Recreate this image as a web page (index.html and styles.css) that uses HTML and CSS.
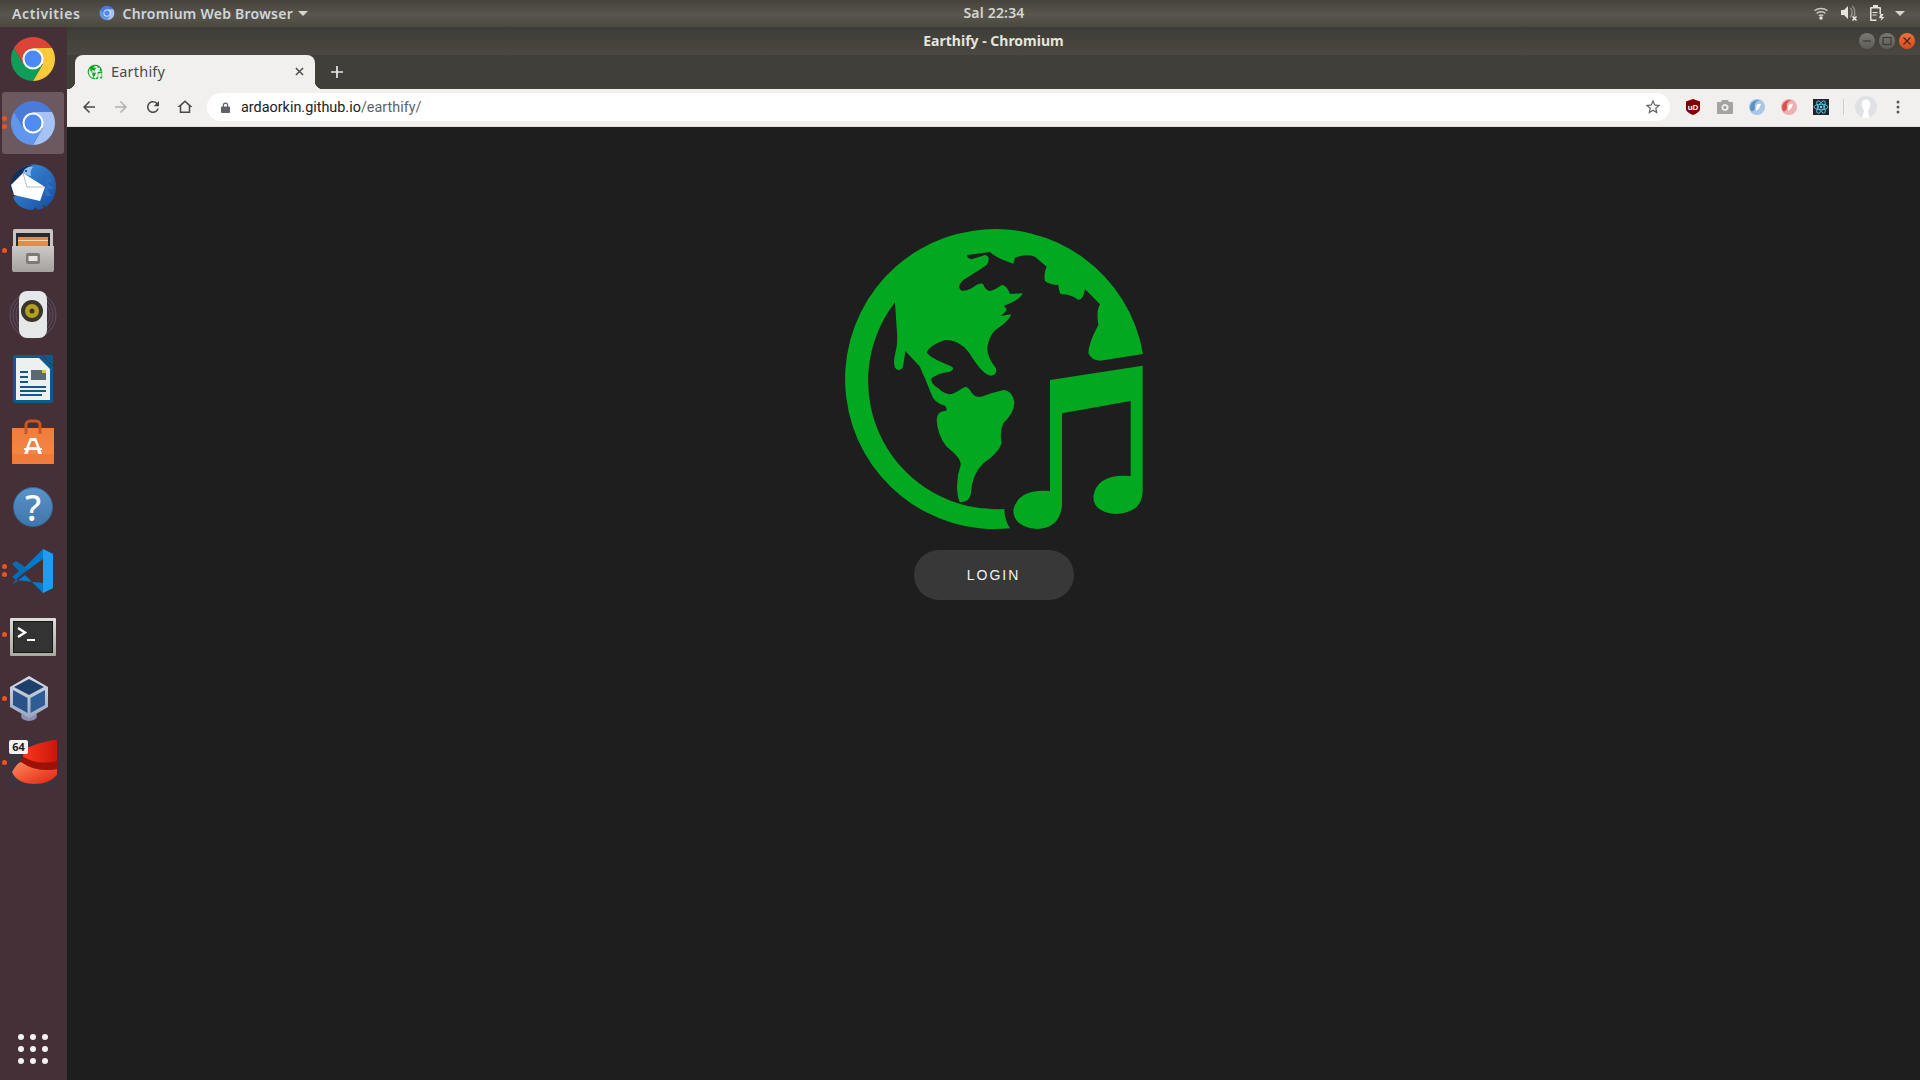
FILE: index.html
```html
<!DOCTYPE html>
<html lang="en">
<head>
  <meta charset="UTF-8">
  <title>Earthify - Chromium</title>
  <link rel="stylesheet" href="styles.css">
</head>
<body>
  <!-- shared icons -->
  <svg class="defs" width="0" height="0">
    <defs>
      <linearGradient id="grad-metal" x1="0" y1="0" x2="0" y2="1"><stop offset="0" stop-color="#cbc9c5"/><stop offset="1" stop-color="#a4a29e"/></linearGradient>
      <linearGradient id="grad-term" x1="0" y1="0" x2="0" y2="1"><stop offset="0" stop-color="#dededa"/><stop offset="1" stop-color="#a8a8a2"/></linearGradient>
      <linearGradient id="grad-hat" x1="0" y1="0" x2="1" y2="0"><stop offset="0" stop-color="#ff3a1c"/><stop offset="1" stop-color="#c8160c"/></linearGradient>
      <linearGradient id="grad-brim" x1="0" y1="0" x2="1" y2="1"><stop offset="0" stop-color="#ff8a5a"/><stop offset="1" stop-color="#e0200f"/></linearGradient>
      <linearGradient id="grad-help" x1="0" y1="0" x2="0" y2="1"><stop offset="0" stop-color="#5a93c8"/><stop offset="1" stop-color="#3f76aa"/></linearGradient>
      <linearGradient id="grad-bag" x1="0" y1="0" x2="0" y2="1"><stop offset="0" stop-color="#ef7c3e"/><stop offset="1" stop-color="#f58a48"/></linearGradient>
      <linearGradient id="grad-cube" x1="0" y1="0" x2="0" y2="1"><stop offset="0" stop-color="#d6deea"/><stop offset="1" stop-color="#9aa8c0"/></linearGradient>
      <linearGradient id="grad-bird" x1="0" y1="0" x2="1" y2="1"><stop offset="0" stop-color="#3f94e4"/><stop offset="1" stop-color="#174a9a"/></linearGradient>
    </defs>
    <symbol id="earthify" viewBox="0 0 990 990">
      <path d="M939 417A450 450 0 1 0 540 940Q523 915 523 882A385 385 0 0 1 195 262L200 340Q204 380 198 405Q188 445 195 458Q207 472 218 458Q222 440 226 408L270 455Q275 470 285 490Q295 515 303 535Q312 565 345 572Q355 585 345 588Q320 590 320 615Q322 660 350 695Q395 730 392 750Q378 790 382 830Q385 860 392 862Q420 860 423 835Q425 780 460 745Q505 715 515 685Q508 650 520 625Q555 590 553 560Q545 525 520 525Q480 535 455 545Q435 548 425 533Q412 510 400 518Q370 538 358 538Q340 535 325 520Q300 505 305 490Q320 475 360 470Q380 460 360 452Q300 430 290 412Q300 390 345 375Q395 375 425 425Q460 480 483 482Q505 478 497 458Q470 425 472 395Q480 350 510 335Q540 315 543 298L510 303Q525 295 530 283L522 272Q570 255 578 235L540 237Q530 210 515 210Q495 225 480 228Q465 225 460 208Q450 200 425 220Q400 232 392 225Q380 215 400 195Q440 170 470 150Q485 125 465 120L425 133Q410 130 412 120L480 111Q500 130 550 146L555 128Q590 115 615 125L650 155Q640 175 645 198Q660 210 685 210Q688 238 695 238Q725 238 745 255Q760 255 765 222L810 268Q798 285 805 330Q775 385 775 415Q785 437 810 437Z"/>
      <path d="M660 495L938 452V830Q935 895 855 897Q790 890 790 845Q800 775 902 783V558L696 595V870Q690 940 620 942Q550 935 550 885Q565 820 660 828Z"/>
    </symbol>
    <symbol id="chromium" viewBox="0 0 48 48">
      <path fill="#4a7bd9" d="M4.950 13A22 22 0 0 1 43.050 13H24L14.500 29.500Z"/>
      <path fill="#a6c3f7" d="M43.050 13A22 22 0 0 1 24 46L33.500 29.500L24 13Z"/>
      <path fill="#6097ec" d="M24 46A22 22 0 0 1 4.950 13L14.500 29.500H33.500Z"/>
      <circle cx="24" cy="24" r="10.500" fill="#fff"/>
      <circle cx="24" cy="24" r="8.500" fill="#4f8bf0"/>
    </symbol>
  </svg>

  <header class="topbar">
    <div class="topbar-left">
      <span class="activities">Activities</span>
      <span class="appmenu">
        <svg class="appmenu-icon"><use href="#chromium"/></svg>
        Chromium Web Browser
        <i class="caret"></i>
      </span>
    </div>
    <div class="clock">Sal 22:34</div>
    <div class="status">
      <svg class="status-icon" viewBox="0 0 16 16"><circle cx="8" cy="13" r="1.700"/><path d="M1 5.200C5 1.900 11 1.900 15 5.200l-1 1.100C10.500 3.500 5.500 3.500 2 6.300zM3.200 7.800c2.900-2.300 6.700-2.300 9.600 0l-1 1.100c-2.300-1.800-5.300-1.800-7.600 0zM5.300 10.200c1.700-1.200 3.700-1.200 5.400 0l-1 1.100c-1.100-.7-2.300-.7-3.400 0z" opacity=".8"/></svg>
      <svg class="status-icon" viewBox="0 0 16 16"><path d="M0 5h3l4-4v13l-4-4H0z"/><path d="M9 3c2.500 1 3 7.500 0 9M11 1c3.500 2 3.500 10 1 12" fill="none" stroke="#d8d6d0" stroke-width="1.300" opacity=".5"/><path d="M11.500 11.500l4 4M15.500 11.500l-4 4" stroke="#e8e6e0" stroke-width="1.500"/></svg>
      <svg class="status-icon" viewBox="0 0 16 16"><path fill-rule="evenodd" d="M4 0h5v2h2a1 1 0 0 1 1 1v6h-1.500V3.500h-8v11h5V16H2a1 1 0 0 1-1-1V3a1 1 0 0 1 1-1h2z"/><path d="M3.500 7h5v1h-5zM3.500 9.500h4v1h-4zM11.500 9l3 0-1.500 3h2.500l-4 4 1-3H10z"/></svg>
      <i class="caret"></i>
    </div>
  </header>

  <div class="desktop">
    <nav class="dock">
      <div class="dock-item">
        <svg class="dock-icon" viewBox="0 0 48 48">
          <path fill="#db4437" d="M4.950 13A22 22 0 0 1 43.050 13H24L14.500 29.500Z"/>
          <path fill="#fdc93c" d="M43.050 13A22 22 0 0 1 24 46L33.500 29.500L24 13Z"/>
          <path fill="#0f9d58" d="M24 46A22 22 0 0 1 4.950 13L14.500 29.500H33.500Z"/>
          <circle cx="24" cy="24" r="10.500" fill="#fff"/>
          <circle cx="24" cy="24" r="8.500" fill="#4a8af4"/>
        </svg>
      </div>
      <div class="dock-item active two">
        <svg class="dock-icon"><use href="#chromium"/></svg>
      </div>
      <div class="dock-item">
        <svg class="dock-icon" viewBox="0 0 48 48">
          <path fill="url(#grad-bird)" d="M9 8C20-3 40 0 46 16C49 28 45 38 37 44L33 41L35 45L28 47L27 44L24 47C14 47 7 42 4 34L30 24Z"/>
          <path fill="#12305f" d="M1 24C2 12 11 2 24 2C20 3 16 6 14 10L3 30Z"/>
          <path fill="#8fc0ee" d="M14 11C14 6 19 3 24 4C22 6 21 9 22 13Z"/>
          <circle cx="17" cy="8" r="1" fill="#12305f"/>
          <path fill="#fff" d="M2 22L14 10L36 24L31 38L5 32Z"/>
          <path fill="none" stroke="#a8a8a8" stroke-width=".8" d="M14 10L18 24L36 24"/>
          <path fill="#2c6fc4" d="M37 13L44 18L38 20L45 25L38 27L43 33L36 33Z"/>
        </svg>
      </div>
      <div class="dock-item one">
        <svg class="dock-icon" viewBox="0 0 48 48">
          <path fill="#c8c6c2" d="M4 4a2 2 0 0 1 2-2h36a2 2 0 0 1 2 2v39a2 2 0 0 1-2 2H6a2 2 0 0 1-2-2z"/>
          <path fill="#2b2a28" d="M7 6h34v14H7z"/>
          <path fill="#e98a3c" d="M9 10h30v10H9z"/>
          <path fill="#f6d3a8" d="M9 13h30v1H9z"/>
          <path fill="url(#grad-metal)" d="M3 19H45V43a2 2 0 0 1-2 2H5a2 2 0 0 1-2-2z"/>
          <rect x="17" y="26" width="14" height="11" rx="2" fill="#7c7a76"/>
          <rect x="19.500" y="29" width="9" height="5" fill="#e6e6e3"/>
        </svg>
      </div>
      <div class="dock-item">
        <svg class="dock-icon" viewBox="0 0 48 48">
          <g fill="none" stroke="#6a6c8a" opacity=".6">
            <circle cx="24" cy="24" r="23"/>
            <circle cx="24" cy="24" r="20"/>
            <circle cx="24" cy="24" r="17"/>
          </g>
          <rect x="10" y="0" width="28" height="47" rx="8" fill="#e4e8e8"/>
          <circle cx="23" cy="20" r="11" fill="#38352e"/>
          <circle cx="23" cy="20" r="7" fill="#b4a01e"/>
          <circle cx="23" cy="20" r="2.500" fill="#38352e"/>
        </svg>
      </div>
      <div class="dock-item">
        <svg class="dock-icon" viewBox="0 0 48 48">
          <path fill="#0f5a8c" d="M6 0H32L44 12V46a2 2 0 0 1-2 2H6a2 2 0 0 1-2-2V2a2 2 0 0 1 2-2z"/>
          <path fill="#eef0f0" d="M7 3H30L41 14V45H7z"/>
          <path fill="#0f5a8c" d="M33 0H44V11z"/>
          <path fill="#0f5a8c" d="M11 16h8v2h-8zM11 21h8v2h-8zM11 26h8v2h-8zM11 31h26v2H11zM11 35h26v2H11zM11 39h22v2H11z"/>
          <path fill="#5a6a72" d="M22 15h15v10H22z"/>
          <path fill="#d8c25a" d="M33 15h4v3h-4z"/>
        </svg>
      </div>
      <div class="dock-item">
        <svg class="dock-icon" viewBox="0 0 48 48">
          <path fill="url(#grad-bag)" d="M3 9H45V44a1 1 0 0 1-1 1H4a1 1 0 0 1-1-1z"/>
          <path fill="#e8682a" d="M3 35H45V45H3z" opacity=".4"/>
          <path fill="none" stroke="#c9551f" stroke-width="3" d="M17 15V6a4 4 0 0 1 4-4h6a4 4 0 0 1 4 4v9"/>
          <path fill="#fff" d="M21 19h6l4 10h2v2h-1.500l1.500 4h-3.500l-1.500-4h-8l-1.500 4H15l1.500-4H15v-2h2zM20 28h8l-2.500-6h-3z"/>
        </svg>
      </div>
      <div class="dock-item">
        <svg class="dock-icon" viewBox="0 0 48 48">
          <circle cx="24" cy="24" r="19.500" fill="url(#grad-help)" stroke="#35679a"/>
          <text class="help-mark" x="24" y="38">?</text>
        </svg>
      </div>
      <div class="dock-item two">
        <svg class="dock-icon" viewBox="0 0 48 48">
          <path fill="#0a6cb5" d="M3 17L7 14L19 23L12 28L7 33L3 30L10 24Z"/>
          <path fill="#007acc" d="M34 2L44 7V41L34 46L16 28L3 38L7 33L34 36V12L19 23L7 14L16 20Z"/>
          <path fill="#1f9cf0" d="M34 2L44 7V41L34 46Z"/>
        </svg>
      </div>
      <div class="dock-item one">
        <svg class="dock-icon" viewBox="0 0 48 48">
          <rect x="1" y="7" width="46" height="38" rx="1" fill="url(#grad-term)"/>
          <rect x="4.500" y="10.500" width="39" height="31" fill="#333" stroke="#161616"/>
          <path fill="none" stroke="#fff" stroke-width="2.400" d="M9 17L16 21.500L9 26"/>
          <path stroke="#fff" stroke-width="2" d="M18 29H26"/>
        </svg>
      </div>
      <div class="dock-item one">
        <svg class="dock-icon" viewBox="0 0 48 48">
          <ellipse cx="20" cy="41" rx="8" ry="5" fill="#8b8fb5"/>
          <path fill="url(#grad-cube)" d="M20 1L39 12V32L20 43L1 32V12Z"/>
          <path fill="#1f3f6b" d="M20 4L35 12L20 20L5 12Z"/>
          <path fill="#2a5288" d="M4 15L18.500 23V38L4 30Z"/>
          <path fill="#2e5c96" d="M36 15L21.500 23V38L36 30Z"/>
        </svg>
      </div>
      <div class="dock-item one">
        <svg class="dock-icon" viewBox="0 0 48 48">
          <rect y="1" width="48" height="47" fill="#3b333d"/>
          <path fill="url(#grad-hat)" d="M16 10Q28 4 44 1H48V30Q28 34 12 24Z"/>
          <path fill="url(#grad-brim)" d="M3 33Q8 24 12 23Q28 34 48 30V36Q40 45 26 45Q8 45 3 33Z"/>
          <path fill="#9c1208" d="M13 17Q28 27 48 22V30Q28 34 12 23Z"/>
        </svg>
        <span class="arch-badge">64</span>
      </div>

      <div class="apps-grid">
        <i></i><i></i><i></i>
        <i></i><i></i><i></i>
        <i></i><i></i><i></i>
      </div>
    </nav>

    <div class="window">
      <div class="titlebar">
        <span></span>
        <span class="title">Earthify - Chromium</span>
        <div class="win-buttons">
          <span class="win-btn"><svg viewBox="0 0 16 16"><path d="M4 8h8" stroke="#3a3a36" stroke-width="1.200"/></svg></span>
          <span class="win-btn"><svg viewBox="0 0 16 16"><rect x="4" y="4.500" width="8" height="7" fill="none" stroke="#3a3a36" stroke-width="1.200"/></svg></span>
          <span class="win-btn close"><svg viewBox="0 0 16 16"><path d="M4.500 4.500l7 7M11.500 4.500l-7 7" stroke="#3a2a20" stroke-width="1.200"/></svg></span>
        </div>
      </div>

      <div class="tabstrip">
        <div class="tab">
          <svg class="favicon"><use href="#earthify"/></svg>
          <span class="tab-title">Earthify</span>
          <svg class="tab-close" viewBox="0 0 10 10"><path d="M1 1l8 8M9 1l-8 8" stroke="#4a4a4a" stroke-width="1.600"/></svg>
        </div>
        <svg class="newtab" viewBox="0 0 12 12"><path d="M6 0v12M0 6h12" stroke="#e8e8e6" stroke-width="1.700"/></svg>
      </div>

      <div class="toolbar">
        <svg class="nav-icon" viewBox="0 0 24 24"><path d="M20 11H7.830l5.590-5.590L12 4l-8 8 8 8 1.410-1.410L7.830 13H20z"/></svg>
        <svg class="nav-icon off" viewBox="0 0 24 24"><path d="M4 11h12.170l-5.590-5.590L12 4l8 8-8 8-1.410-1.410L16.170 13H4z"/></svg>
        <svg class="nav-icon" viewBox="0 0 24 24"><path d="M17.650 6.350A7.960 7.960 0 0 0 12 4c-4.420 0-7.990 3.580-7.990 8s3.570 8 7.990 8c3.730 0 6.840-2.550 7.730-6h-2.080A5.990 5.990 0 0 1 12 18c-3.310 0-6-2.690-6-6s2.690-6 6-6c1.660 0 3.140.690 4.220 1.780L13 11h7V4z"/></svg>
        <svg class="nav-icon" viewBox="0 0 24 24"><path d="M12 5.690l5 4.500V18H7v-7.810l5-4.500M12 3L2 12h3v8h14v-8h3z"/></svg>

        <div class="omnibox">
          <svg class="lock" viewBox="0 0 10 12"><path fill-rule="evenodd" d="M2 5V3.500a3 3 0 0 1 6 0V5h1a1 1 0 0 1 1 1v5a1 1 0 0 1-1 1H1a1 1 0 0 1-1-1V6a1 1 0 0 1 1-1zm1.300 0h3.400V3.500a1.700 1.700 0 0 0-3.400 0z"/></svg>
          <span class="url"><span class="host">ardaorkin.github.io</span>/earthify/</span>
          <svg class="star" viewBox="0 0 24 24"><path d="M22 9.240l-7.190-.620L12 2 9.190 8.630 2 9.240l5.460 4.730L5.820 21 12 17.270 18.180 21l-1.630-7.030L22 9.240zM12 15.400l-3.760 2.270 1-4.280-3.320-2.880 4.380-.380L12 6.100l1.710 4.040 4.380.380-3.320 2.880 1 4.280L12 15.400z"/></svg>
        </div>

        <div class="extensions">
          <svg class="ext" viewBox="0 0 16 16">
            <path fill="#800000" d="M8 0L15 2.500V10C15 12.500 11 15 8 16C5 15 1 12.500 1 10V2.500Z"/>
            <text class="ublock-mark" x="8" y="10.500">uD</text>
          </svg>
          <svg class="ext" viewBox="0 0 16 16">
            <path fill="#a3a3a3" fill-rule="evenodd" d="M1 3h3l1-2h6l1 2h3a1 1 0 0 1 1 1v10a1 1 0 0 1-1 1H1a1 1 0 0 1-1-1V4a1 1 0 0 1 1-1zM8 5a3.500 3.500 0 1 0 .1 0zm0 1.800a1.700 1.700 0 1 1-.1 0z"/>
          </svg>
          <svg class="ext" viewBox="0 0 16 16">
            <circle cx="8" cy="8" r="8" fill="#a9c6e6"/>
            <path fill="#5d90c6" d="M2 12C-1 6 4 0 11 1C7 2 5 5 6 8C6 11 4 13 2 12Z"/>
            <path fill="#fff" d="M7 8a3.500 3.500 0 0 1 5-3C11 8 10 10 7 12z"/>
          </svg>
          <svg class="ext" viewBox="0 0 16 16">
            <circle cx="8" cy="8" r="8" fill="#ecb0b0"/>
            <path fill="#d85050" d="M2 12C-1 6 4 0 11 1C7 2 5 5 6 8C6 11 4 13 2 12Z"/>
            <path fill="#fff" d="M7 8a3.500 3.500 0 0 1 5-3C11 8 10 10 7 12z"/>
          </svg>
          <svg class="ext" viewBox="0 0 16 16">
            <rect width="16" height="16" fill="#20232a"/>
            <g fill="none" stroke="#61dafb" stroke-width=".8">
              <ellipse cx="8" cy="8" rx="7" ry="2.800"/>
              <ellipse cx="8" cy="8" rx="7" ry="2.800" transform="rotate(60 8 8)"/>
              <ellipse cx="8" cy="8" rx="7" ry="2.800" transform="rotate(120 8 8)"/>
            </g>
            <circle cx="8" cy="8" r="1.300" fill="#61dafb"/>
          </svg>
        </div>
        <i class="toolbar-sep"></i>
        <svg class="avatar" viewBox="0 0 22 22">
          <circle cx="11" cy="11" r="11" fill="#dfe1e5"/>
          <path fill="#fff" d="M11 3.500c3 0 4.500 2.500 4.200 5.500-.2 2.500-1.500 4-2 5.500-.3 1.500 1 4 1.300 7.500h-7c.3-3.500 1.600-6 1.300-7.500-.5-1.500-1.800-3-2-5.500C6.500 6 8 3.500 11 3.500z"/>
        </svg>
        <svg class="menu-dots" viewBox="0 0 4 14"><circle cx="2" cy="2" r="1.500"/><circle cx="2" cy="7" r="1.500"/><circle cx="2" cy="12" r="1.500"/></svg>
      </div>

      <main class="page">
        <svg class="logo" viewBox="-3 0 987 990"><use href="#earthify" width="990" height="990"/></svg>
        <button class="login-btn">LOGIN</button>
      </main>
    </div>
  </div>
</body>
</html>
```

FILE: styles.css
```css
html, body {
  margin: 0;
  padding: 0;
  height: 100%;
}
body {
  width: 1920px;
  height: 1080px;
  overflow: hidden;
  display: flex;
  flex-direction: column;
  font-family: "Noto Sans", "Open Sans", sans-serif;
  background: #1e1e1e;
}
.defs {
  position: absolute;
}

/* gnome top bar */
.topbar {
  height: 27px;
  box-sizing: border-box;
  padding-bottom: 1px;
  display: grid;
  grid-template-columns: 927px 132px 1fr;
  align-items: center;
  background: linear-gradient(#45423b, #5a564e 55%, #4b4840);
  color: #d6d6cf;
  font-size: 14px;
  font-weight: 600;
}
.topbar-left {
  display: flex;
  align-items: center;
}
.activities {
  margin-left: 12px;
  letter-spacing: .6px;
  color: #cfd6dc;
}
.appmenu {
  display: flex;
  align-items: center;
  margin-left: 19px;
  letter-spacing: .25px;
  color: #cfd6dc;
}
.appmenu-icon {
  width: 16px;
  height: 16px;
  margin-right: 7px;
}
.caret {
  display: inline-block;
  width: 0;
  height: 0;
  margin-left: 5px;
  border-left: 5px solid transparent;
  border-right: 5px solid transparent;
  border-top: 5px solid #d6d6cf;
}
.clock {
  padding: 0 0 2px 2px;
  text-align: center;
  letter-spacing: .2px;
}
.status {
  display: flex;
  align-items: center;
  justify-content: flex-end;
  gap: 12px;
  padding-right: 15px;
}
.status .caret {
  margin-left: -2px;
}
.status-icon {
  width: 16px;
  height: 16px;
  fill: #e4e2dc;
}

/* dock + browser window */
.desktop {
  flex: 1;
  display: flex;
  min-height: 0;
}
.dock {
  width: 67px;
  box-sizing: border-box;
  padding-right: 1px;
  flex-shrink: 0;
  display: flex;
  flex-direction: column;
  align-items: center;
  background: #463038;
}
.dock-item {
  position: relative;
  width: 62px;
  height: 64px;
  display: flex;
  align-items: center;
  justify-content: center;
  flex-shrink: 0;
}
.dock-item.active::after {
  content: '';
  position: absolute;
  left: 0;
  right: 0;
  top: 1px;
  bottom: 1px;
  border-radius: 3px;
  background: rgba(255, 255, 255, .2);
}
.dock-icon {
  position: relative;
  z-index: 1;
  width: 48px;
  height: 48px;
}
/* running app dots */
.dock-item.one::before,
.dock-item.two::before {
  content: '';
  position: absolute;
  z-index: 2;
  left: 0;
  top: 29px;
  width: 5px;
  height: 5px;
  border-radius: 50%;
  background: #e95420;
}
.dock-item.two::before {
  top: 25px;
  box-shadow: 0 8px 0 #e95420;
}
.arch-badge {
  position: absolute;
  z-index: 2;
  left: 7px;
  top: 9px;
  width: 19px;
  border-radius: 2px;
  background: #f2f2f2;
  color: #222;
  font-size: 11px;
  line-height: 14px;
  font-weight: 700;
  text-align: center;
}
.help-mark {
  fill: #fff;
  font-family: "Noto Sans", sans-serif;
  font-size: 36px;
  font-weight: 500;
  text-anchor: middle;
}
.apps-grid {
  margin-top: auto;
  margin-bottom: 16px;
  display: grid;
  grid-template-columns: repeat(3, 6px);
  gap: 6px;
}
.apps-grid i {
  width: 6px;
  height: 6px;
  border-radius: 50%;
  background: #f2f2f2;
}

.window {
  flex: 1;
  min-width: 0;
  display: flex;
  flex-direction: column;
}
.titlebar {
  height: 28px;
  box-sizing: border-box;
  padding-bottom: 1px;
  display: grid;
  grid-template-columns: 1fr auto 1fr;
  align-items: center;
  background: linear-gradient(#3d3c36, #4a4840);
  color: #e4e4de;
  font-size: 14px;
  font-weight: 700;
}
.win-buttons {
  display: flex;
  justify-content: flex-end;
  gap: 4px;
  padding-right: 5px;
}
.win-btn {
  width: 16px;
  height: 16px;
  border-radius: 50%;
  background: linear-gradient(#7a7872, #5e5c56);
}
.win-btn svg {
  display: block;
}
.win-btn.close {
  background: linear-gradient(#f0703c, #d84c1a);
}

.tabstrip {
  height: 34px;
  display: flex;
  align-items: flex-end;
  padding-left: 8px;
  background: #403f39;
}
.tab {
  position: relative;
  width: 240px;
  height: 34px;
  box-sizing: border-box;
  display: flex;
  align-items: center;
  padding: 0 11px 1px 12px;
  border-radius: 8px 8px 0 0;
  background: #f1f0ee;
  color: #4a4a4a;
  font-size: 14.5px;
}
.tab::before,
.tab::after {
  content: '';
  position: absolute;
  bottom: 0;
  width: 8px;
  height: 8px;
}
.tab::before {
  left: -8px;
  background: radial-gradient(circle at 0 0, transparent 8px, #f1f0ee 8.5px);
}
.tab::after {
  right: -8px;
  background: radial-gradient(circle at 100% 0, transparent 8px, #f1f0ee 8.5px);
}
.favicon {
  width: 16px;
  height: 16px;
  fill: #02a820;
  flex-shrink: 0;
}
.tab-title {
  flex: 1;
  margin-left: 8px;
  padding-bottom: 2px;
  letter-spacing: .2px;
}
.tab-close {
  width: 9px;
  height: 9px;
}
.newtab {
  width: 12px;
  height: 12px;
  margin: 0 0 11px 16px;
}

.toolbar {
  height: 38px;
  box-sizing: border-box;
  display: flex;
  align-items: center;
  padding: 0 20px 1px 13px;
  background: #f1f0ee;
  border-bottom: 1px solid #e2e2e0;
}
.nav-icon {
  width: 18px;
  height: 18px;
  margin-right: 14px;
  fill: #48484a;
  flex-shrink: 0;
}
.nav-icon.off {
  fill: #b0b0ae;
}
.omnibox {
  flex: 1;
  height: 28px;
  margin-left: -1px;
  display: flex;
  align-items: center;
  padding: 0 8px 0 14px;
  border-radius: 14px;
  background: #fff;
}
.lock {
  width: 9px;
  height: 11px;
  fill: #5f6368;
  flex-shrink: 0;
}
.url {
  flex: 1;
  margin-left: 11px;
  font-family: "Roboto", "Noto Sans", sans-serif;
  font-size: 14.4px;
  color: #5f6368;
}
.host {
  color: #202124;
}
.star {
  width: 18px;
  height: 18px;
  fill: #5f6368;
}
.extensions {
  display: flex;
  gap: 16px;
  margin-left: 15px;
}
.ext {
  width: 16px;
  height: 16px;
  display: block;
}
.ublock-mark {
  fill: #fff;
  font-family: "Liberation Sans", sans-serif;
  font-size: 8px;
  font-weight: 700;
  text-anchor: middle;
}
.toolbar-sep {
  width: 1px;
  height: 16px;
  margin: 0 11px 0 14px;
  background: #cfcfcd;
}
.avatar {
  width: 22px;
  height: 22px;
  flex-shrink: 0;
}
.menu-dots {
  width: 4px;
  height: 14px;
  margin-left: 19px;
  fill: #5a5a5a;
  flex-shrink: 0;
}

/* the page itself */
.page {
  flex: 1;
  display: flex;
  flex-direction: column;
  align-items: center;
  gap: 5px;
  padding-top: 88px;
  background: #1e1e1e;
}
.logo {
  width: 329px;
  height: 330px;
  fill: #02a820;
}
.login-btn {
  width: 160px;
  height: 50px;
  border: 0;
  border-radius: 25px;
  background: #383838;
  color: #f2f2f2;
  font-family: "Liberation Sans", Arial, sans-serif;
  font-size: 14px;
  letter-spacing: 2px;
}
```
